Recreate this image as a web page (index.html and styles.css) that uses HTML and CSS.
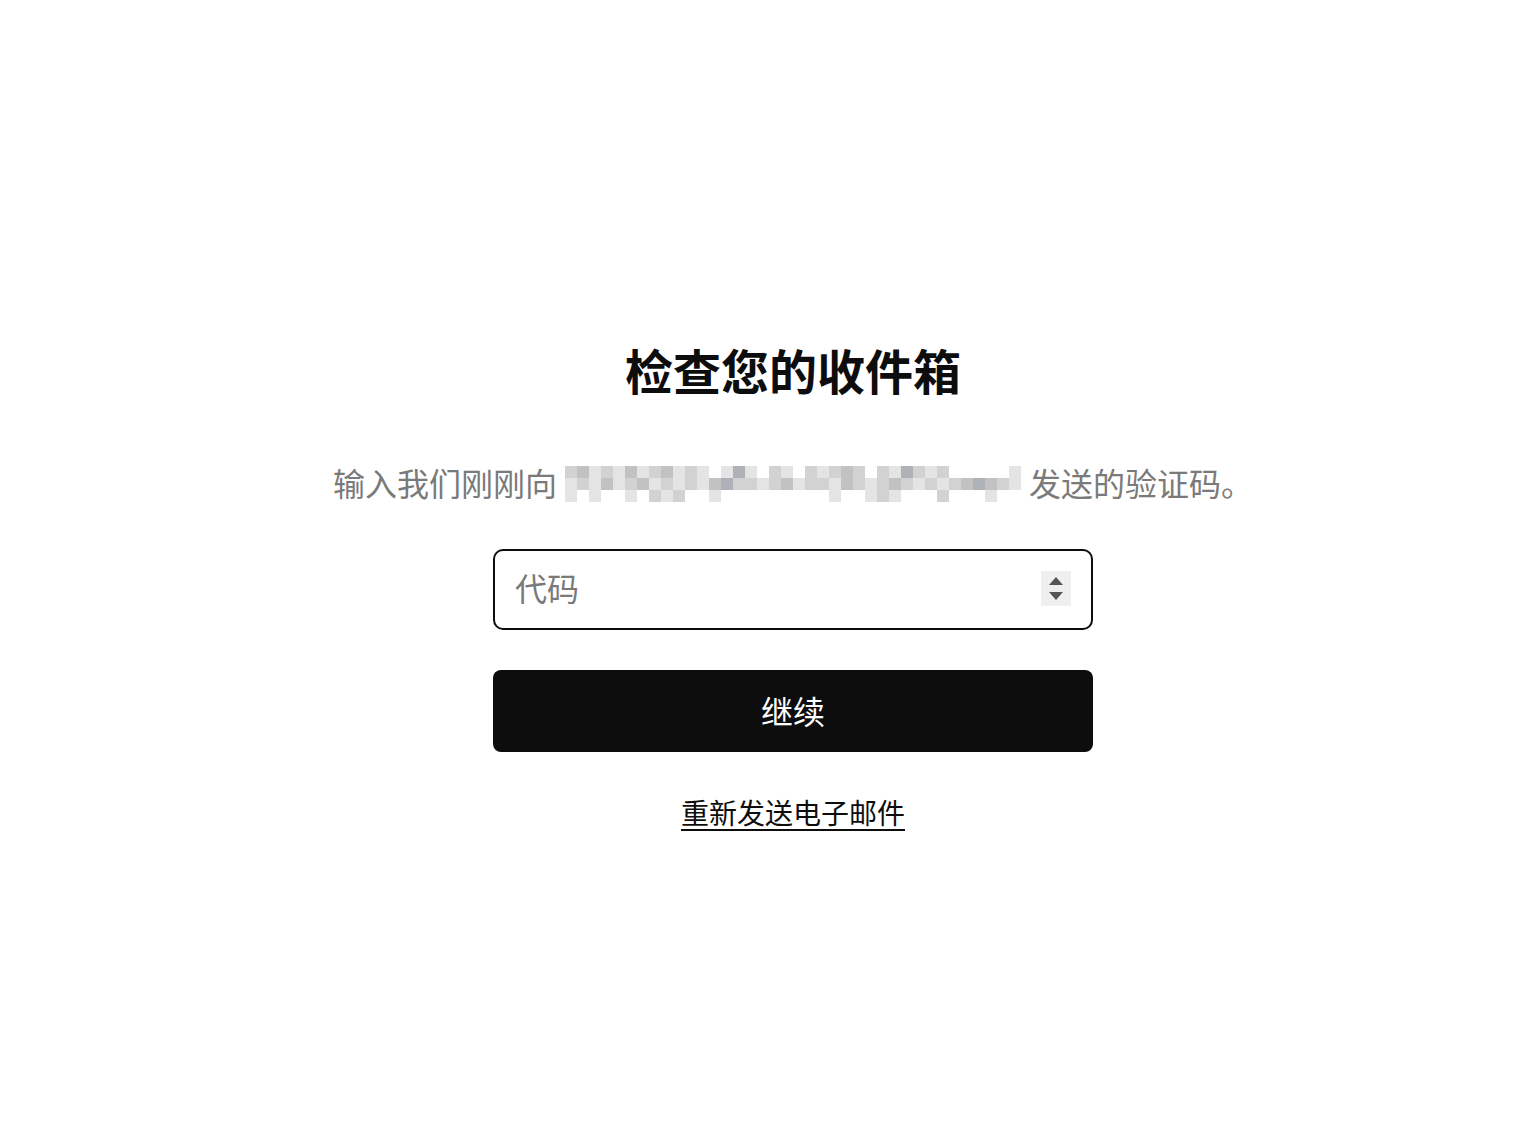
FILE: index.html
```html
<!DOCTYPE html>
<html lang="zh-CN">
<head>
<meta charset="utf-8">
<title>检查您的收件箱</title>
<link rel="stylesheet" href="styles.css">
</head>
<body>
<main class="page">
  <section class="card">
    <h1 class="title">检查您的收件箱</h1>
    <p class="subtitle">输入我们刚刚向 <span class="blur" aria-label="email hidden">
      <span class="b"></span><span class="c"></span><span class="a"></span><span class="b"></span><span class="a"></span><span class="c"></span><span class="a"></span><span class="b"></span><span class="c"></span><span class="a"></span><span class="b"></span><span class="a"></span><span class="e"></span><span class="a"></span><span class="d"></span><span class="a"></span><span class="e"></span><span class="b"></span><span class="a"></span><span class="e"></span><span class="b"></span><span class="a"></span><span class="b"></span><span class="c"></span><span class="b"></span><span class="e"></span><span class="b"></span><span class="a"></span><span class="d"></span><span class="b"></span><span class="a"></span><span class="b"></span><span class="e"></span><span class="e"></span><span class="e"></span><span class="e"></span><span class="e"></span><span class="a"></span>
      <span class="a"></span><span class="b"></span><span class="a"></span><span class="c"></span><span class="a"></span><span class="b"></span><span class="c"></span><span class="a"></span><span class="b"></span><span class="a"></span><span class="b"></span><span class="a"></span><span class="c"></span><span class="d"></span><span class="b"></span><span class="b"></span><span class="a"></span><span class="b"></span><span class="c"></span><span class="a"></span><span class="b"></span><span class="b"></span><span class="a"></span><span class="c"></span><span class="b"></span><span class="a"></span><span class="b"></span><span class="c"></span><span class="b"></span><span class="a"></span><span class="b"></span><span class="a"></span><span class="b"></span><span class="c"></span><span class="d"></span><span class="c"></span><span class="b"></span><span class="a"></span>
      <span class="a"></span><span class="e"></span><span class="a"></span><span class="e"></span><span class="e"></span><span class="a"></span><span class="e"></span><span class="b"></span><span class="a"></span><span class="b"></span><span class="e"></span><span class="e"></span><span class="a"></span><span class="e"></span><span class="e"></span><span class="e"></span><span class="e"></span><span class="e"></span><span class="e"></span><span class="e"></span><span class="e"></span><span class="e"></span><span class="a"></span><span class="e"></span><span class="e"></span><span class="a"></span><span class="b"></span><span class="a"></span><span class="e"></span><span class="e"></span><span class="e"></span><span class="b"></span><span class="e"></span><span class="e"></span><span class="e"></span><span class="a"></span><span class="e"></span><span class="e"></span>
    </span> 发送的验证码。</p>
    <div class="field">
      <input class="code-input" type="text" inputmode="numeric" placeholder="代码">
      <span class="spinner" aria-hidden="true">
        <span class="tri up"></span>
        <span class="tri down"></span>
      </span>
    </div>
    <button class="btn" type="button">继续</button>
    <a class="resend" href="#">重新发送电子邮件</a>
  </section>
</main>
</body>
</html>
```

FILE: styles.css
```css
* { box-sizing: border-box; }

html, body {
  margin: 0;
  padding: 0;
  background: #ffffff;
}

body {
  font-family: "Noto Sans CJK SC", "Noto Sans", "Liberation Sans", sans-serif;
  color: #0d0d0d;
}

.page {
  display: flex;
  justify-content: center;
  padding-left: 68px;
  padding-top: 340px;
  min-height: 1142px;
}

.card {
  display: flex;
  flex-direction: column;
  align-items: center;
  width: 960px;
}

.title {
  margin: 0;
  font-size: 48px;
  line-height: 58px;
  font-weight: 700;
  color: #0d0d0d;
  letter-spacing: 0;
}

.subtitle {
  margin: 64px 0 0;
  font-size: 32px;
  line-height: 40px;
  color: #7a7a7a;
  white-space: nowrap;
  display: flex;
  align-items: center;
  gap: 8px;
}

.blur {
  display: inline-grid;
  grid-template-columns: repeat(38, 12px);
  grid-auto-rows: 12px;
  width: 456px;
  height: 36px;
  margin-top: 4px;
}

.blur span { display: block; }
.blur .a { background: #e4e4e4; }
.blur .b { background: #d2d2d2; }
.blur .c { background: #c2c2c3; }
.blur .d { background: #aeb2b8; }
.blur .e { background: transparent; }

.field {
  position: relative;
  margin-top: 47px;
  width: 600px;
  height: 81px;
}

.code-input {
  width: 100%;
  height: 100%;
  border: 2px solid #0d0d0d;
  border-radius: 10px;
  padding: 0 70px 5px 20px;
  font-family: inherit;
  font-size: 32px;
  color: #0d0d0d;
  background: #fff;
  outline: none;
}

.code-input::placeholder {
  color: #7a7a7a;
}

.spinner {
  position: absolute;
  right: 22px;
  top: 22px;
  width: 30px;
  height: 35px;
  background: #efefef;
  display: flex;
  flex-direction: column;
  align-items: center;
  justify-content: center;
  gap: 7px;
}

.tri {
  width: 0;
  height: 0;
  border-left: 7px solid transparent;
  border-right: 7px solid transparent;
}

.tri.up { border-bottom: 8px solid #555; }
.tri.down { border-top: 8px solid #555; }

.btn {
  margin-top: 40px;
  width: 600px;
  height: 82px;
  border: none;
  border-radius: 8px;
  background: #0d0d0d;
  color: #ffffff;
  font-family: inherit;
  font-size: 32px;
  padding-bottom: 3px;
  cursor: pointer;
}

.resend {
  margin-top: 42px;
  font-size: 28px;
  line-height: 36px;
  color: #0d0d0d;
  text-decoration: underline;
  text-underline-offset: 5px;
  text-decoration-thickness: 2px;
}
```
